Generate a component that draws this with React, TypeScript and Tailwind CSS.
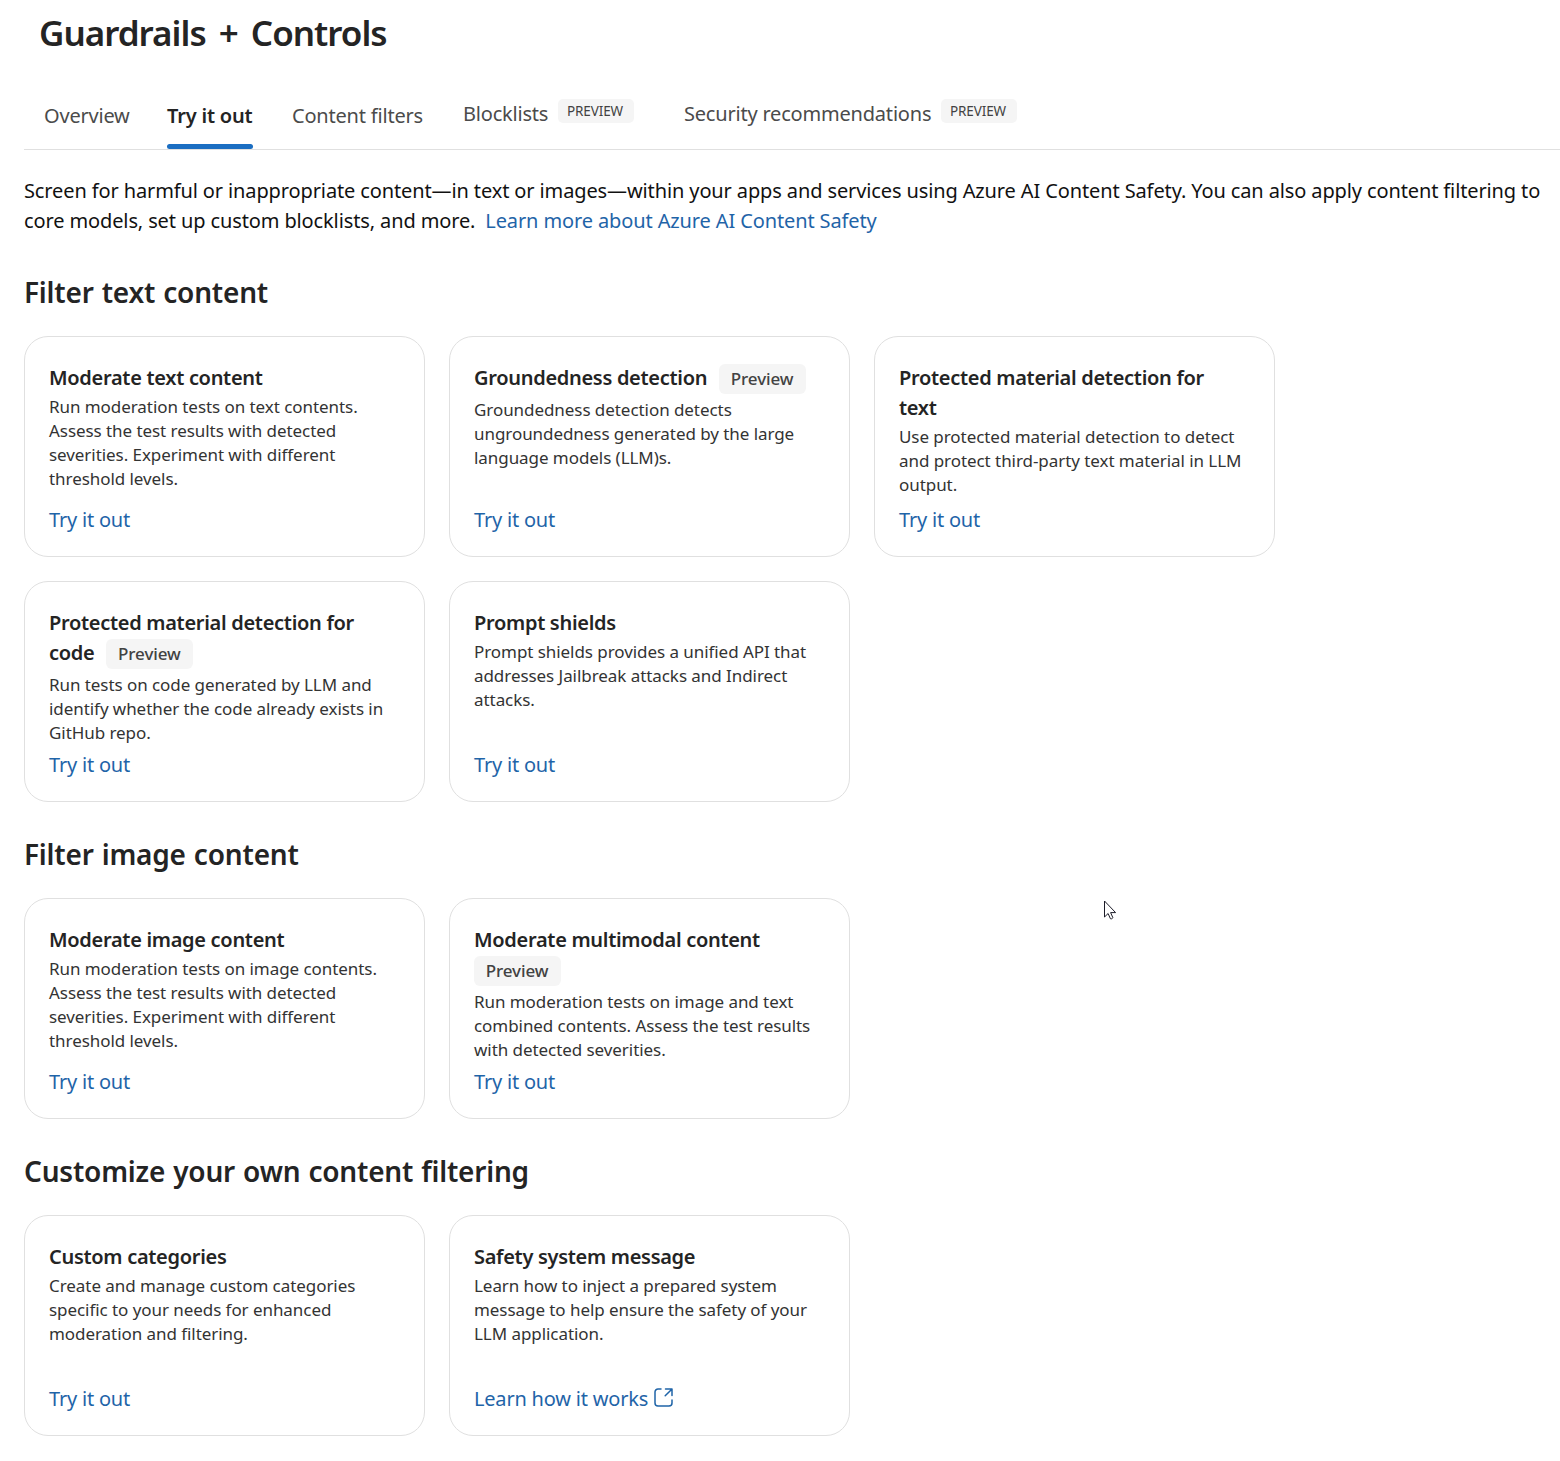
import React from "react";

type CardData = {
  title: string[];
  preview?: "inline" | "below";
  lines: string[];
  link?: string;
};

const textCards: CardData[] = [
  {
    title: ["Moderate text content"],
    lines: ["Run moderation tests on text contents.", "Assess the test results with detected", "severities. Experiment with different", "threshold levels."],
  },
  {
    title: ["Groundedness detection"],
    preview: "inline",
    lines: ["Groundedness detection detects", "ungroundedness generated by the large", "language models (LLM)s."],
  },
  {
    title: ["Protected material detection for", "text"],
    lines: ["Use protected material detection to detect", "and protect third-party text material in LLM", "output."],
  },
  {
    title: ["Protected material detection for", "code"],
    preview: "inline",
    lines: ["Run tests on code generated by LLM and", "identify whether the code already exists in", "GitHub repo."],
  },
  {
    title: ["Prompt shields"],
    lines: ["Prompt shields provides a unified API that", "addresses Jailbreak attacks and Indirect", "attacks."],
  },
];

const imageCards: CardData[] = [
  {
    title: ["Moderate image content"],
    lines: ["Run moderation tests on image contents.", "Assess the test results with detected", "severities. Experiment with different", "threshold levels."],
  },
  {
    title: ["Moderate multimodal content"],
    preview: "below",
    lines: ["Run moderation tests on image and text", "combined contents. Assess the test results", "with detected severities."],
  },
];

const customCards: CardData[] = [
  {
    title: ["Custom categories"],
    lines: ["Create and manage custom categories", "specific to your needs for enhanced", "moderation and filtering."],
  },
  {
    title: ["Safety system message"],
    lines: ["Learn how to inject a prepared system", "message to help ensure the safety of your", "LLM application."],
    link: "Learn how it works",
  },
];

function PreviewBadge() {
  return (
    <span className="flex h-[30px] w-[87px] translate-y-px items-center justify-center rounded-md bg-[#f5f5f5] pr-px text-[17px] font-medium tracking-[-0.1px] text-[#424242]">
      Preview
    </span>
  );
}

function OpenIcon() {
  return (
    <svg className="-translate-y-[2px]" width="19" height="19" viewBox="0 0 19 19" fill="none" stroke="currentColor" strokeWidth="1.5" strokeLinecap="round" strokeLinejoin="round">
      <path d="M7 1H4a3 3 0 0 0-3 3v11a3 3 0 0 0 3 3h11a3 3 0 0 0 3-3v-3M11.5 1H18v6.5M17.8 1.2l-6.6 6.6" />
    </svg>
  );
}

function Card({ title, preview, lines, link }: CardData) {
  const last = title.length - 1;
  return (
    <article className="flex h-[221px] flex-col whitespace-nowrap rounded-3xl border border-[#e0e0e0] px-6 pt-[26px] pb-[21px]">
      <h3 className="text-[20px] leading-[30px] font-semibold tracking-[-0.3px] text-[#242424]">
        {title.map((t, i) => (
          <span key={t} className="flex items-center gap-3">
            {t}
            {preview === "inline" && i === last && <PreviewBadge />}
          </span>
        ))}
        {preview === "below" && <PreviewBadge />}
      </h3>
      <p className={`${preview ? "mt-[5px]" : "mt-[2px]"} text-[17px] leading-6 tracking-[-0.06px] text-[#333333]`}>
        {lines.map((l) => (
          <span key={l} className="block">{l}</span>
        ))}
      </p>
      <a className="mt-auto flex items-center gap-[6px] text-[20px] leading-[30px] tracking-[-0.2px] text-[#1f64a8]">
        <span>{link ?? "Try it out"}</span>
        {link && <OpenIcon />}
      </a>
    </article>
  );
}

function Section({ heading, cards }: { heading: string; cards: CardData[] }) {
  return (
    <section className="mt-8 ml-6">
      <h2 className="mb-6 text-[28px] leading-[40px] font-semibold tracking-[-0.2px] text-[#242424] [word-spacing:1px]">{heading}</h2>
      <div className="grid grid-cols-[repeat(3,401px)] gap-6">
        {cards.map((c) => (
          <Card key={c.title.join(" ")} {...c} />
        ))}
      </div>
    </section>
  );
}

function Tag() {
  return (
    <span className="flex h-6 w-[76px] items-center justify-center rounded-[5px] bg-[#f5f5f5] pr-[2px] text-[13.5px] tracking-[-0.1px] text-[#424242]">
      PREVIEW
    </span>
  );
}

export default function App() {
  return (
    <main className="h-[1461px] w-[1560px] overflow-hidden bg-white font-['Noto_Sans','Open_Sans',sans-serif]">
      <h1 className="ml-[39px] pt-[9px] text-[35px] leading-[48px] font-semibold tracking-[-1px] text-[#242424] [word-spacing:5px]">Guardrails + Controls</h1>

      <nav className="mt-[25px] ml-6 flex h-[68px] border-b border-[#e0e0e0] whitespace-nowrap text-[20px] leading-[30px] tracking-[-0.2px] text-[#4b4b4b]">
        <div className="ml-5 w-[86px] pt-[19px]">Overview</div>
        <div className="ml-[37px] flex w-[86px] flex-col justify-between pt-[19px] font-semibold text-[#242424]">
          <span>Try it out</span>
          <span className="h-[5px] rounded-full bg-[#1b6ec2]" />
        </div>
        <div className="ml-[39px] w-[131px] pt-[19px]">Content filters</div>
        <div className="ml-10 flex w-[171px] pt-[17px]">
          <span className="w-[95px]">Blocklists</span>
          <Tag />
        </div>
        <div className="ml-[50px] flex pt-[17px]">
          <span className="w-[257px]">Security recommendations</span>
          <Tag />
        </div>
      </nav>

      <p className="mt-[26px] ml-6 whitespace-nowrap text-[20px] leading-[30px] tracking-[-0.12px] text-[#111111]">
        <span className="block">Screen for harmful or inappropriate content—in text or images—within your apps and services using Azure AI Content Safety. You can also apply content filtering to</span>
        <span className="flex gap-[10px]">
          <span>core models, set up custom blocklists, and more.</span>
          <a className="text-[#1f64a8]">Learn more about Azure AI Content Safety</a>
        </span>
      </p>

      <div className="relative pt-1">
        <Section heading="Filter text content" cards={textCards} />
        <Section heading="Filter image content" cards={imageCards} />
        <Section heading="Customize your own content filtering" cards={customCards} />
        <svg className="absolute top-[664px] left-[1104px]" width="13" height="20" viewBox="0 0 13 20" fill="white" stroke="#1c1c28" strokeWidth="1">
          <path d="M.5 1v16l3.6-3.5 2.3 5.2c.9.5 2.3-.1 2.4-1.2l-2.2-4.9h5z" />
        </svg>
      </div>
    </main>
  );
}
